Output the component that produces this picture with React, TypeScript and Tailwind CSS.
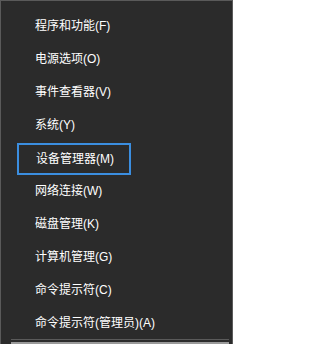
const items = [
  "程序和功能(F)",
  "电源选项(O)",
  "事件查看器(V)",
  "系统(Y)",
  "设备管理器(M)",
  "网络连接(W)",
  "磁盘管理(K)",
  "计算机管理(G)",
  "命令提示符(C)",
  "命令提示符(管理员)(A)",
];

export default function App() {
  return (
    <div
      className="w-[233px] h-[344px] overflow-hidden bg-[#2b2b2b] border-l border-r border-t border-[#5a5a5a] flex flex-col text-[12px] text-white"
      style={{ fontFamily: '"Liberation Sans", "Noto Sans CJK SC", sans-serif' }}
    >
      <div className="pt-[8px] flex flex-col">
        {items.map((label, i) =>
          i === 4 ? (
            <div key={label} className="h-[33px] flex items-center">
              <div className="ml-[16px] w-[114px] h-[32px] mt-[2px] border-2 border-[#3b8ee0] pl-[17px] flex items-center">
                {label}
              </div>
            </div>
          ) : (
            <div key={label} className="h-[33px] flex items-center pl-[34px]">
              {label}
            </div>
          )
        )}
      </div>
      <div className="mt-auto ml-[10px] mr-[3px] h-px bg-[#5a5a5a]" />
      <div className="ml-[10px] mr-[3px] h-[3px] mt-[2px] bg-[#9a9a9a]" />
    </div>
  );
}
